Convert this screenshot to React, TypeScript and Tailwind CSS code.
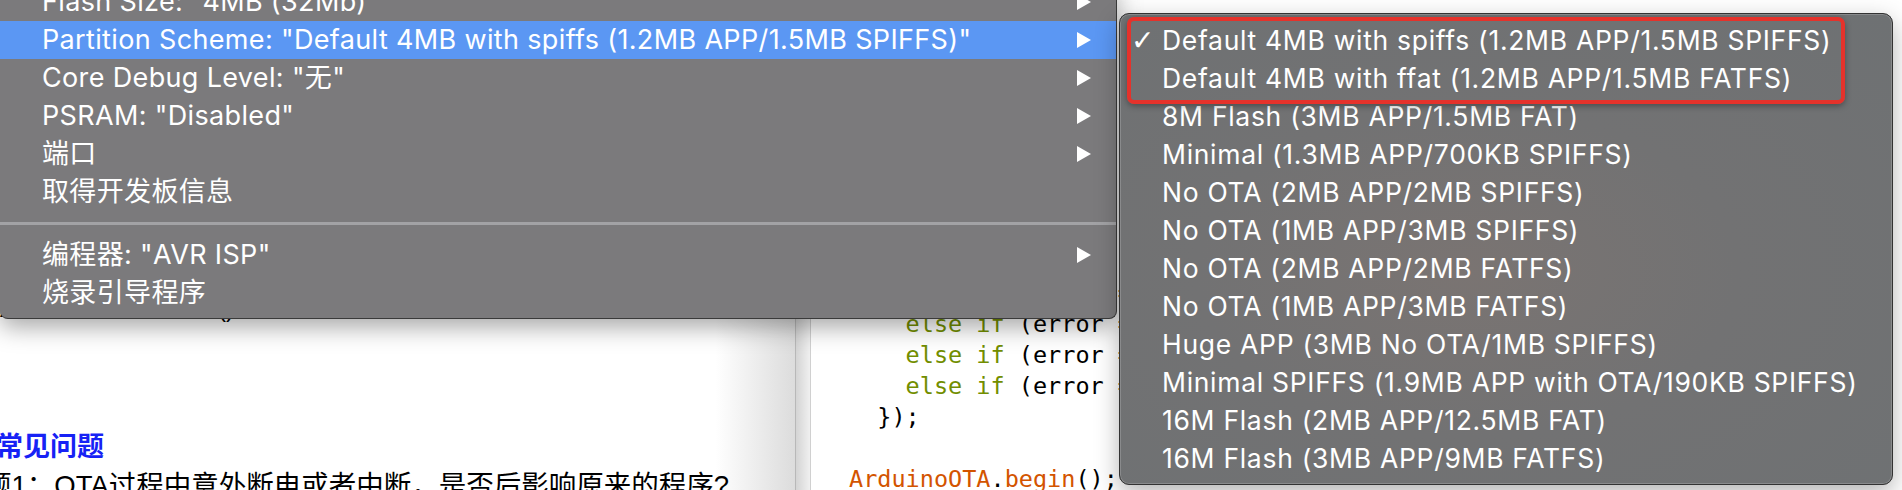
import React from 'react';

type MenuItem = { label: string; arrow?: boolean; active?: boolean } | 'sep';

const mainItems: MenuItem[] = [
  { label: 'Flash Size: "4MB (32Mb)"', arrow: true },
  { label: 'Partition Scheme: "Default 4MB with spiffs (1.2MB APP/1.5MB SPIFFS)"', arrow: true, active: true },
  { label: 'Core Debug Level: "无"', arrow: true },
  { label: 'PSRAM: "Disabled"', arrow: true },
  { label: '端口', arrow: true },
  { label: '取得开发板信息' },
  'sep',
  { label: '编程器: "AVR ISP"', arrow: true },
  { label: '烧录引导程序' },
];

const schemes = [
  'Default 4MB with spiffs (1.2MB APP/1.5MB SPIFFS)',
  'Default 4MB with ffat (1.2MB APP/1.5MB FATFS)',
  '8M Flash (3MB APP/1.5MB FAT)',
  'Minimal (1.3MB APP/700KB SPIFFS)',
  'No OTA (2MB APP/2MB SPIFFS)',
  'No OTA (1MB APP/3MB SPIFFS)',
  'No OTA (2MB APP/2MB FATFS)',
  'No OTA (1MB APP/3MB FATFS)',
  'Huge APP (3MB No OTA/1MB SPIFFS)',
  'Minimal SPIFFS (1.9MB APP with OTA/190KB SPIFFS)',
  '16M Flash (2MB APP/12.5MB FAT)',
  '16M Flash (3MB APP/9MB FATFS)',
];

const Arrow = () => (
  <svg width="16" height="18" viewBox="0 0 16 18">
    <path d="M1 1 L15 9 L1 17 Z" fill="white" />
  </svg>
);

const codeLines: React.ReactNode[] = [
  <>    <span className="text-[#728e00]">else if</span> (error == OTA_AUTH_ERROR) Serial.println("Auth Failed");</>,
  <>    <span className="text-[#728e00]">else if</span> (error == OTA_BEGIN_ERROR) Serial.println("Begin Failed");</>,
  <>    <span className="text-[#728e00]">else if</span> (error == OTA_CONNECT_ERROR) Serial.println("Connect Failed");</>,
  <>    <span className="text-[#728e00]">else if</span> (error == OTA_RECEIVE_ERROR) Serial.println("Receive Failed");</>,
  <>  {'});'}</>,
  <> </>,
  <><span className="text-[#d35400]">ArduinoOTA</span>.<span className="text-[#d35400]">begin</span>();</>,
];

export default function App() {
  return (
    <div className="relative w-[1902px] h-[490px] overflow-hidden bg-white font-['Inter','Noto_Sans_CJK_SC',sans-serif]">
      {/* windows behind the menus */}
      <div className="flex h-full">
        <div className="w-[795px] h-full flex flex-col pt-[293px] bg-gradient-to-r from-white from-[90%] to-[#dcdcdc] overflow-hidden">
          <div className="h-[30px] leading-[30px] text-[25px] text-black whitespace-nowrap font-['Liberation_Sans',sans-serif]">ArduinoOTA.handle()</div>
          <div className="mt-[105px] h-[34px] leading-[34px] ml-[-4px] text-[27px] font-bold text-[#1722f5] whitespace-nowrap font-['Noto_Sans_CJK_SC',sans-serif]">常见问题</div>
          <div className="mt-[7px] h-[34px] leading-[34px] ml-[-16px] text-[27.5px] text-black whitespace-nowrap font-['Liberation_Sans','Noto_Sans_CJK_SC',sans-serif]">题1：OTA过程中意外断电或者中断，是否后影响原来的程序?</div>
        </div>
        <div className="w-[15px] h-full border-l border-[#b8b8b8] bg-gradient-to-r from-[#d4d4d4] to-[#f0f0f0]" />
        <div className="flex-1 h-full bg-white border-l border-[#d0d0d0] pt-[278px] pl-[38px] overflow-hidden font-['DejaVu_Sans_Mono',monospace] text-[23.5px] text-black">
          {codeLines.map((l, i) => (
            <div key={i} className="h-[31px] leading-[31px] whitespace-pre">{l}</div>
          ))}
        </div>
      </div>

      {/* main menu */}
      <div className="absolute left-0 top-[-17px] w-[1117px] pb-[6px] rounded-b-[8px] border-r border-b border-[#3a3a3a] bg-[#7b7a7c] shadow-[0_8px_24px_rgba(0,0,0,0.35)] text-white text-[27px] tracking-[0.35px]">
        {mainItems.map((it, i) =>
          it === 'sep' ? (
            <div key={i} className="h-[25px] flex items-center">
              <div className="w-full h-[3px] bg-[#a2a2a5]" />
            </div>
          ) : (
            <div
              key={i}
              className={`h-[38px] flex items-center justify-between pl-[42px] pr-[24px] whitespace-nowrap ${it.active ? 'bg-[#5b97f3]' : ''}`}
            >
              <span>{it.label}</span>
              {it.arrow && <Arrow />}
            </div>
          )
        )}
      </div>

      {/* submenu */}
      <div className="absolute left-[1119px] top-[13px] w-[774px] h-[472px] py-[8px] rounded-[10px] border border-[#333] bg-[#6f7173] bg-[radial-gradient(ellipse_at_45%_55%,#7a7472_0%,#727273_45%,#6e7173_100%)] shadow-[inset_0_0_0_1px_rgba(255,255,255,0.18),0_8px_24px_rgba(0,0,0,0.3)] text-white text-[26.5px] tracking-[0.7px]">
        {schemes.map((s, i) => (
          <div key={i} className="h-[38px] flex items-center whitespace-nowrap">
            <span className="w-[42px] pl-[11px] text-[28px] font-bold font-['DejaVu_Sans',sans-serif]">{i === 0 ? '✓' : ''}</span>
            <span>{s}</span>
          </div>
        ))}
      </div>

      {/* annotation */}
      <div className="absolute left-[1127px] top-[17px] w-[718px] h-[87px] rounded-[7px] border-4 border-[#e5322b] shadow-[0_2px_6px_rgba(0,0,0,0.35)]" />
    </div>
  );
}
